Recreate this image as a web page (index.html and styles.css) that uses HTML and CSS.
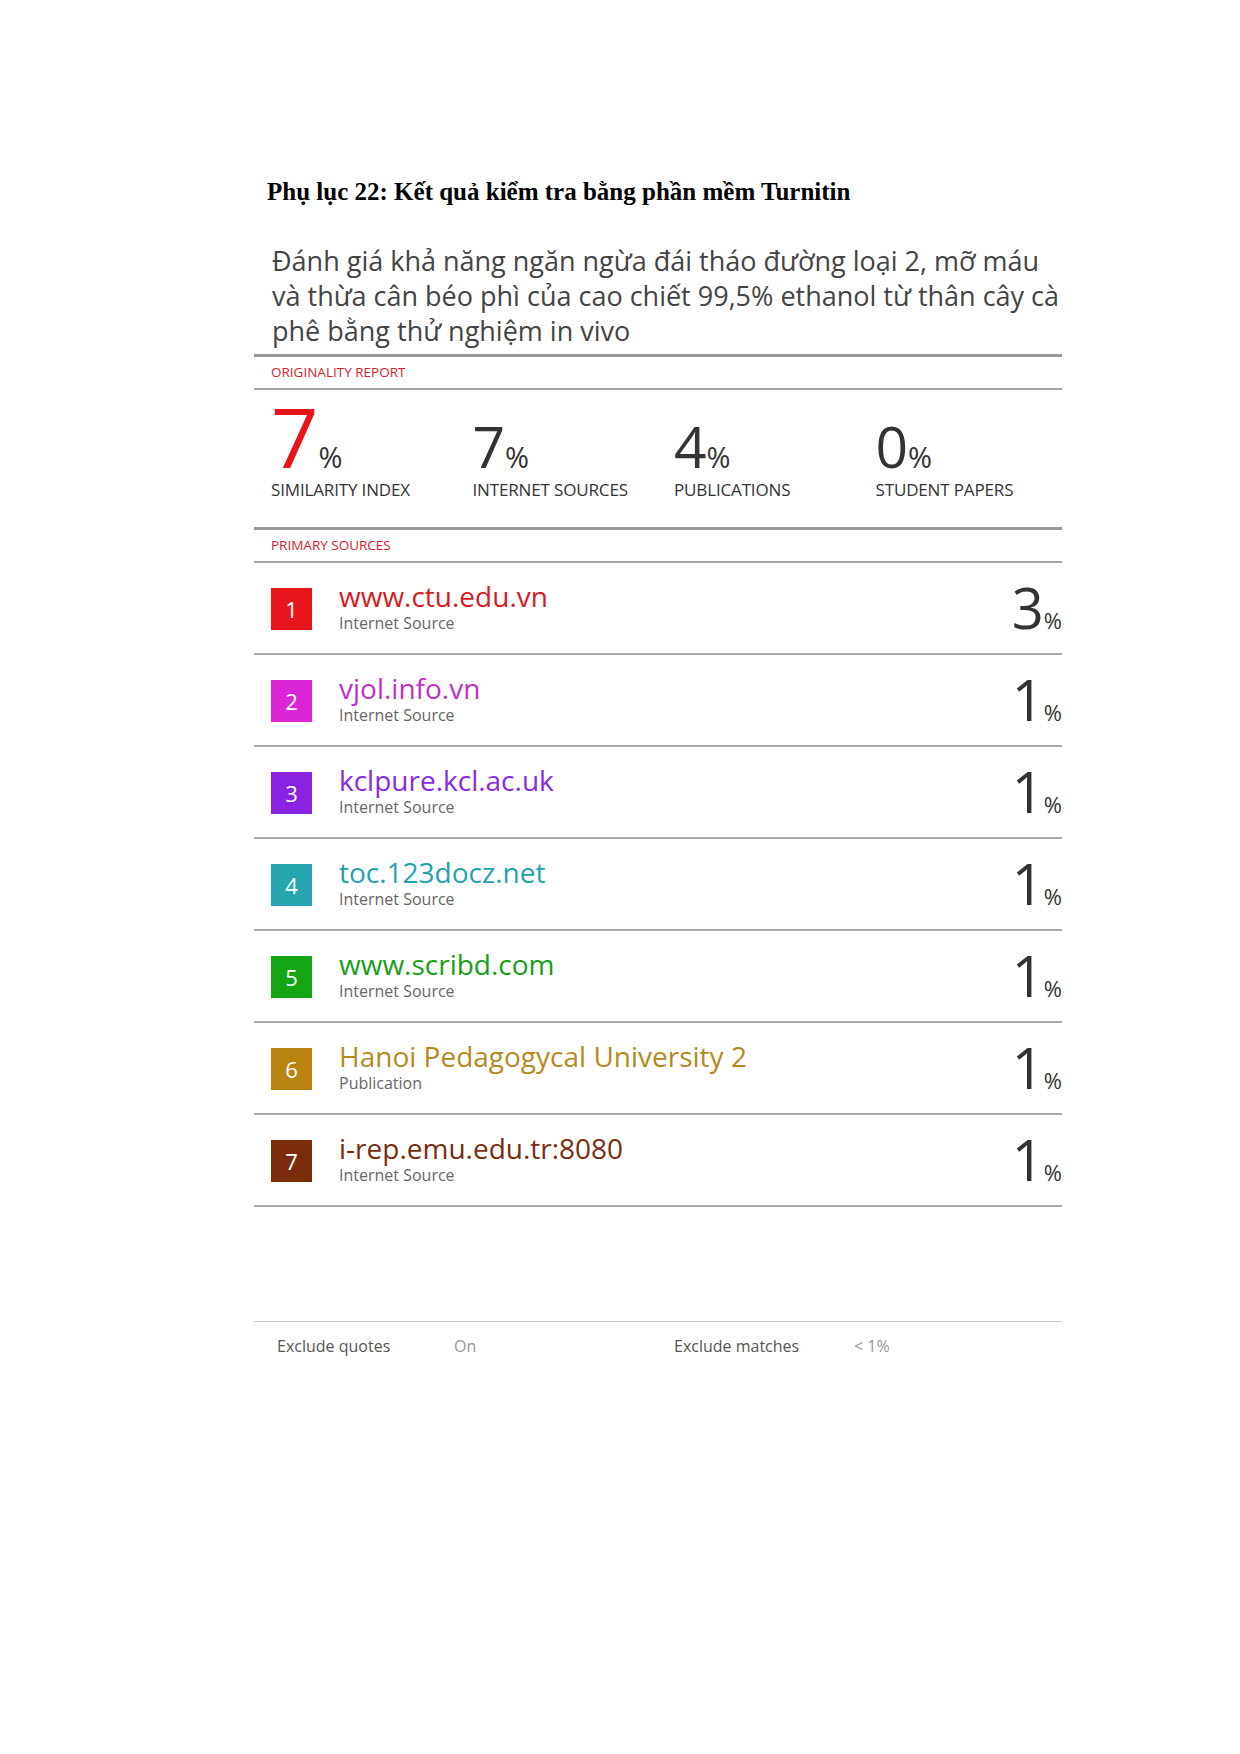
FILE: index.html
```html
<!DOCTYPE html>
<html lang="vi">
<head>
<meta charset="utf-8">
<title>Phụ lục 22</title>
<link rel="stylesheet" href="styles.css">
</head>
<body>
<div class="page">
  <h1 class="heading">Phụ lục 22: Kết quả kiểm tra bằng phần mềm Turnitin</h1>
  <div class="report">
    <div class="doc-title">Đánh giá khả năng ngăn ngừa đái tháo đường loại 2, mỡ máu<br>và thừa cân béo phì của cao chiết 99,5% ethanol từ thân cây cà<br>phê bằng thử nghiệm in vivo</div>
    <div class="section-label">ORIGINALITY REPORT</div>
    <div class="stats">
      <div class="stat">
        <div class="figure"><span class="num num-main">7</span><span class="pct">%</span></div>
        <div class="stat-label">SIMILARITY INDEX</div>
      </div>
      <div class="stat">
        <div class="figure"><span class="num">7</span><span class="pct">%</span></div>
        <div class="stat-label">INTERNET SOURCES</div>
      </div>
      <div class="stat">
        <div class="figure"><span class="num">4</span><span class="pct">%</span></div>
        <div class="stat-label">PUBLICATIONS</div>
      </div>
      <div class="stat">
        <div class="figure"><span class="num">0</span><span class="pct">%</span></div>
        <div class="stat-label">STUDENT PAPERS</div>
      </div>
    </div>
    <div class="section-label">PRIMARY SOURCES</div>
    <div class="sources">
      <div class="source c1">
        <div class="badge">1</div>
        <div class="info"><div class="name">www.ctu.edu.vn</div><div class="type">Internet Source</div></div>
        <div class="share"><span class="share-num">3</span><span class="share-pct">%</span></div>
      </div>
      <div class="source c2">
        <div class="badge">2</div>
        <div class="info"><div class="name">vjol.info.vn</div><div class="type">Internet Source</div></div>
        <div class="share"><span class="share-num">1</span><span class="share-pct">%</span></div>
      </div>
      <div class="source c3">
        <div class="badge">3</div>
        <div class="info"><div class="name">kclpure.kcl.ac.uk</div><div class="type">Internet Source</div></div>
        <div class="share"><span class="share-num">1</span><span class="share-pct">%</span></div>
      </div>
      <div class="source c4">
        <div class="badge">4</div>
        <div class="info"><div class="name">toc.123docz.net</div><div class="type">Internet Source</div></div>
        <div class="share"><span class="share-num">1</span><span class="share-pct">%</span></div>
      </div>
      <div class="source c5">
        <div class="badge">5</div>
        <div class="info"><div class="name">www.scribd.com</div><div class="type">Internet Source</div></div>
        <div class="share"><span class="share-num">1</span><span class="share-pct">%</span></div>
      </div>
      <div class="source c6">
        <div class="badge">6</div>
        <div class="info"><div class="name">Hanoi Pedagogycal University 2</div><div class="type">Publication</div></div>
        <div class="share"><span class="share-num">1</span><span class="share-pct">%</span></div>
      </div>
      <div class="source c7">
        <div class="badge">7</div>
        <div class="info"><div class="name">i-rep.emu.edu.tr:8080</div><div class="type">Internet Source</div></div>
        <div class="share"><span class="share-num">1</span><span class="share-pct">%</span></div>
      </div>
    </div>
    <div class="footer">
      <span class="f-key">Exclude quotes</span>
      <span class="f-val">On</span>
      <span class="f-key">Exclude matches</span>
      <span class="f-val">&lt; 1%</span>
    </div>
  </div>
</div>
</body>
</html>
```

FILE: styles.css
```css
* { box-sizing: border-box; }
html, body { margin: 0; padding: 0; background: #fff; }
.page {
  width: 1240px;
  min-height: 1754px;
  padding-top: 177px;
}
.heading {
  margin: 0 0 0 267px;
  font-family: "Liberation Serif", "Times New Roman", serif;
  font-weight: bold;
  font-size: 25px;
  line-height: 29px;
  color: #000;
}
.report {
  margin: 37px 0 0 254px;
  width: 808px;
  font-family: "Open Sans", "DejaVu Sans", sans-serif;
}
.doc-title {
  padding: 0 0 6px 18px;
  font-size: 27px;
  line-height: 35px;
  color: #444;
  white-space: nowrap;
  border-bottom: 3px solid #999;
}
.section-label {
  height: 33px;
  padding-left: 17px;
  font-size: 13.5px;
  line-height: 31px;
  color: #d4232b;
  border-bottom: 2px solid #a5a5a5;
}
.stats {
  display: flex;
  padding: 10px 0 0 17px;
  height: 140px;
  border-bottom: 3px solid #999;
}
.stat {
  flex: 0 0 201.5px;
}
.figure {
  height: 72px;
  font-size: 83px;
  line-height: 72px;
  color: #333;
  white-space: nowrap;
}
.num {
  display: inline-block;
  font-size: 57px;
  line-height: 0.75;
  color: #333;
}
.num-main {
  font-size: 83px;
  color: #e8141b;
}
.pct {
  display: inline-block;
  font-size: 29px;
  line-height: 0.75;
  color: #333;
}
.stat-label {
  margin-top: 7px;
  font-size: 17px;
  line-height: 22px;
  color: #333;
  letter-spacing: -0.15px;
  white-space: nowrap;
}
.source {
  display: flex;
  align-items: flex-start;
  height: 92px;
  padding-left: 17px;
  border-bottom: 2px solid #a8a8a8;
}
.badge {
  width: 41px;
  height: 42px;
  margin-top: 25px;
  color: #fff;
  font-size: 22px;
  line-height: 42px;
  text-align: center;
}
.info {
  margin-left: 27px;
  padding-top: 17px;
}
.name {
  font-size: 28px;
  line-height: 32px;
  white-space: nowrap;
}
.type {
  margin-top: 1px;
  font-size: 16px;
  line-height: 20px;
  color: #666;
}
.share {
  margin-left: auto;
  margin-top: 16px;
  height: 56px;
  font-size: 56px;
  line-height: 56px;
  color: #333;
  white-space: nowrap;
}
.share-num { display: inline-block; line-height: 0.8; }
.share-pct { display: inline-block; font-size: 22px; line-height: 0.8; }
.c1 .badge { background: #e8151c; } .c1 .name { color: #d81b22; }
.c2 .badge { background: #db26d8; } .c2 .name { color: #c42ec8; }
.c3 .badge { background: #8a22e2; } .c3 .name { color: #8a2be2; }
.c4 .badge { background: #26a6b0; } .c4 .name { color: #1fa3ad; }
.c5 .badge { background: #14a514; } .c5 .name { color: #16a016; }
.c6 .badge { background: #b8840f; } .c6 .name { color: #b58a1c; }
.c7 .badge { background: #7b2c0b; } .c7 .name { color: #7a2c10; }
.footer {
  display: grid;
  grid-template-columns: 177px 220px 180px auto;
  margin-top: 114px;
  padding: 14px 0 0 23px;
  border-top: 1px solid #ccc;
  font-size: 16px;
  line-height: 20px;
}
.f-key { color: #555; }
.f-val { color: #999; }
```
